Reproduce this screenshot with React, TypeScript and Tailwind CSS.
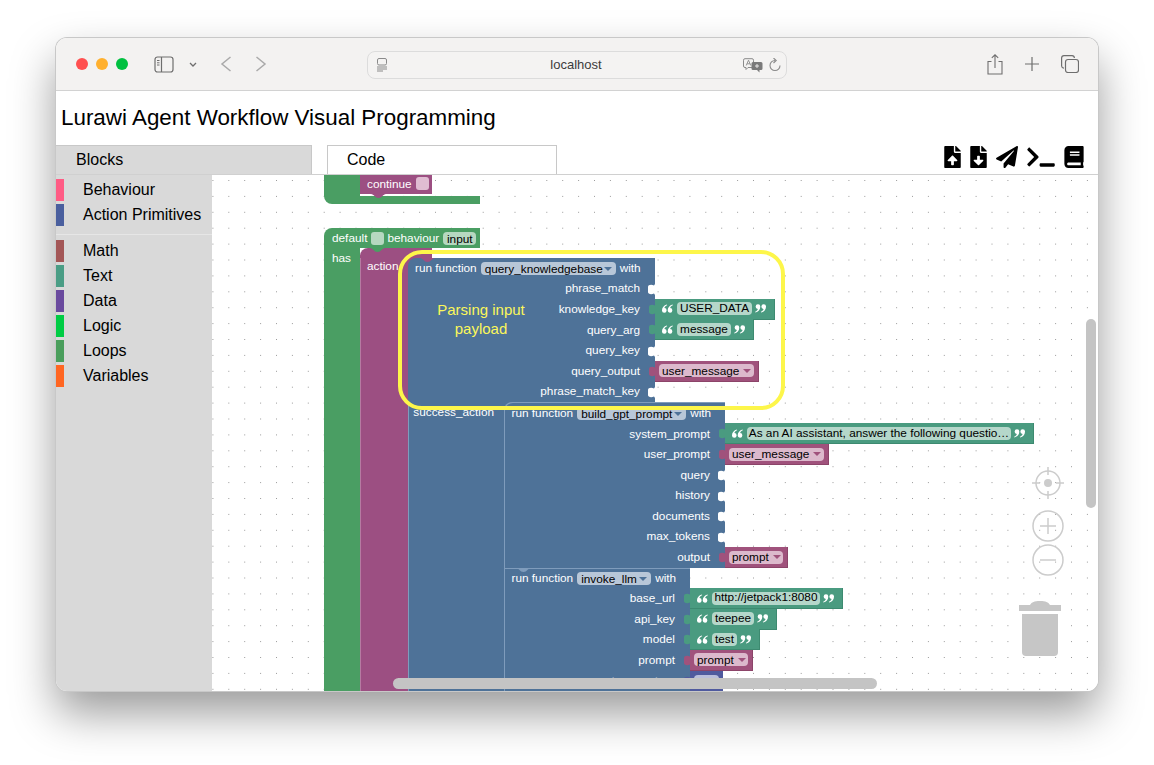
import React from 'react';
import { FaFileUpload, FaFileDownload, FaPaperPlane, FaTerminal, FaBook } from 'react-icons/fa';

const categories = [
  { label: 'Behaviour', color: 'bg-[#ff5c85]' },
  { label: 'Action Primitives', color: 'bg-[#4a5f9e]' },
  { label: 'Math', color: 'bg-[#a35656]', divider: true },
  { label: 'Text', color: 'bg-[#4a9d85]' },
  { label: 'Data', color: 'bg-[#6a4a9e]' },
  { label: 'Logic', color: 'bg-[#00cc44]' },
  { label: 'Loops', color: 'bg-[#4a9e5c]' },
  { label: 'Variables', color: 'bg-[#ff6622]' },
];

const tabPath = 'M7 0L6 1.5C3 0 0 1 0 3V8C0 10 3 11 6 9.5L7 11Z';

const Tab = ({ className }: { className: string }) => (
  <svg viewBox="0 0 7 11" className={`absolute right-full top-[5px] -mr-px h-[11px] w-[7px] ${className}`}>
    <path d={tabPath} />
  </svg>
);

const Quote = ({ close }: { close?: boolean }) => (
  <svg viewBox="0 0 10 8" className={`h-[9px] w-[11px] fill-white ${close ? 'rotate-180' : ''}`}>
    <path d="M4.4.3C1.8 1 0 3 0 5.6A2.1 2.1 0 1 0 2.2 3.6C2.4 2.6 3.2 1.6 4.7 1.1ZM9.6.3C7 1 5.2 3 5.2 5.6A2.1 2.1 0 1 0 7.4 3.6C7.6 2.6 8.4 1.6 9.9 1.1Z" />
  </svg>
);

const Str = ({ text, width }: { text: string; width: string }) => (
  <div className={`absolute left-full top-[-0.6px] z-10 flex h-[21px] items-center border-r border-b border-[#3d8a70] bg-[#4a9b80] ${width}`}>
    <Tab className="fill-[#4a9b80]" />
    <div className="flex w-[22px] shrink-0 justify-end pr-[4px]"><Quote /></div>
    <div className="flex h-[13px] min-w-0 flex-1 items-center justify-center overflow-hidden whitespace-nowrap rounded-[4px] bg-[#b5d7ca] text-[11.8px] text-black">{text}</div>
    <div className="flex w-[22px] shrink-0 justify-start pl-[3px]"><Quote close /></div>
  </div>
);

const Var = ({ text, width }: { text: string; width: string }) => (
  <div className={`absolute left-full top-[-0.6px] z-10 flex h-[21px] items-center border-r border-b border-[#8c4469] bg-[#a0527c] pl-[4px] pr-[4px] ${width}`}>
    <Tab className="fill-[#a0527c]" />
    <div className="flex h-[13px] flex-1 items-center rounded-[4px] bg-[#dcb9cc] pl-[3px] text-[11.8px] leading-[14px] text-black">
      <span>{text}</span>
      <span className="ml-[4px] h-0 w-0 border-x-[4px] border-t-[4px] border-x-transparent border-t-[#a0527c]" />
    </div>
  </div>
);

const Input = ({ label, children }: { label: string; children?: React.ReactNode }) => (
  <div className="relative flex h-[20.6px] items-center justify-end">
    <span className="whitespace-nowrap pr-[15px] text-[11.8px] text-white">{label}</span>
    {children ?? (
      <svg viewBox="0 0 7 11" className="absolute right-0 top-[5px] h-[11px] w-[7px] fill-white">
        <path d={tabPath} />
      </svg>
    )}
  </div>
);

const FnHead = ({ name, width }: { name: string; width: string }) => (
  <div className="flex h-[20.6px] items-center gap-[4px] pl-[7.5px] text-[11.8px] text-white">
    <span className="whitespace-nowrap">run function</span>
    <div className={`flex h-[13px] items-center justify-between rounded-[4px] bg-[#b8c7d8] px-[4px] leading-[14px] text-black ${width}`}>
      <span>{name}</span>
      <span className="h-0 w-0 border-x-[4px] border-t-[4px] border-x-transparent border-t-[#4e7298]" />
    </div>
    <span>with</span>
  </div>
);

const Notch = ({ className }: { className: string }) => (
  <svg viewBox="0 0 15 4" className={`absolute h-[4px] w-[15px] ${className}`}>
    <path d="M0 0C3 0 4 4 7.5 4S12 0 15 0Z" />
  </svg>
);

const Browser = () => (
  <div className="flex h-[53px] shrink-0 items-center border-b border-[#d2d2d2] bg-[#f3f2f1] pl-[20px] text-[#6e6e6e]">
    <div className="flex gap-[8px]">
      <span className="h-[12px] w-[12px] rounded-full bg-[#ff5050]" />
      <span className="h-[12px] w-[12px] rounded-full bg-[#ffb02e]" />
      <span className="h-[12px] w-[12px] rounded-full bg-[#00c040]" />
    </div>
    <svg viewBox="0 0 20 17" className="ml-[26px] h-[17px] w-[20px] fill-none stroke-[#6e6e6e]">
      <rect x="1" y="1" width="18" height="15" rx="2.5" strokeWidth="1.2" />
      <path d="M7.5 1V16" strokeWidth="1.2" />
      <path d="M3 4.5H5.5M3 6.8H5.5M3 9H5.5" strokeWidth="1" />
    </svg>
    <svg viewBox="0 0 8 5" className="ml-[15px] h-[5px] w-[8px] fill-none stroke-[#6e6e6e]">
      <path d="M1 1L4 4L7 1" strokeWidth="1.3" />
    </svg>
    <svg viewBox="0 0 12 16" className="ml-[23px] h-[16px] w-[12px] fill-none stroke-[#aaaaaa]">
      <path d="M10.5 1L2 8L10.5 15" strokeWidth="1.5" />
    </svg>
    <svg viewBox="0 0 12 16" className="ml-[23px] h-[16px] w-[12px] fill-none stroke-[#aaaaaa]">
      <path d="M1.5 1L10 8L1.5 15" strokeWidth="1.5" />
    </svg>
    <div className="relative ml-[100px] mt-[2px] flex h-[28px] w-[420px] items-center justify-center rounded-[8px] border border-[#dcdcdc] bg-[#f4f3f2] text-[13px] text-[#3c3c3c]">
      <svg viewBox="0 0 12 14" className="absolute left-[8px] top-[6px] h-[14px] w-[12px] fill-none stroke-[#8a8a8a]">
        <rect x="1.5" y="0.5" width="9" height="6.5" rx="1.5" />
        <path d="M1 9H11M1 11H11M1 13H7" />
      </svg>
      <span className="-ml-[2px]">localhost</span>
      <svg viewBox="0 0 20 15" className="absolute right-[23px] top-[6px] h-[15px] w-[20px]">
        <path d="M2 .7H9A1.5 1.5 0 0 1 10.5 2.2V8A1.5 1.5 0 0 1 9 9.5H5L3 11.5V9.5H2A1.5 1.5 0 0 1 .5 8V2.2A1.5 1.5 0 0 1 2 .7Z" fill="#f4f3f2" stroke="#8a8a8a" />
        <path d="M3.2 7.5L5.5 2.2L7.8 7.5M4.1 5.8H6.9" fill="none" stroke="#8a8a8a" strokeWidth=".9" />
        <path d="M10 4H18A1.5 1.5 0 0 1 19.5 5.5V10.5A1.5 1.5 0 0 1 18 12H16.5V14.5L14 12H10A1.5 1.5 0 0 1 8.5 10.5V5.5A1.5 1.5 0 0 1 10 4Z" fill="#7a7a7a" />
        <path d="M12 8H16M14 6V10" stroke="#f4f3f2" strokeWidth=".9" />
      </svg>
      <svg viewBox="0 0 12 14" className="absolute right-[5px] top-[6px] h-[14px] w-[12px] fill-none stroke-[#8a8a8a]">
        <path d="M6 2.5A5 5 0 1 0 11 7.5" strokeWidth="1.1" />
        <path d="M4.5 0L7.2 2.5L4.5 5" strokeWidth="1.1" />
      </svg>
    </div>
    <svg viewBox="0 0 16 21" className="ml-[200px] h-[21px] w-[16px] fill-none stroke-[#6e6e6e]">
      <path d="M4.5 7.5H1V20H15V7.5H11.5M8 14V1M4.8 3.8L8 .8L11.2 3.8" strokeWidth="1.1" />
    </svg>
    <svg viewBox="0 0 14 14" className="ml-[22px] h-[14px] w-[14px] fill-none stroke-[#6e6e6e]">
      <path d="M7 0V14M0 7H14" strokeWidth="1.2" />
    </svg>
    <svg viewBox="0 0 18 18" className="ml-[22px] h-[18px] w-[18px] fill-none stroke-[#6e6e6e]">
      <rect x="4.5" y="4.5" width="13" height="13" rx="2.5" strokeWidth="1.2" />
      <path d="M3 13.2A2.5 2.5 0 0 1 .6 11V3A2.5 2.5 0 0 1 3 .6H11A2.5 2.5 0 0 1 13.4 3" strokeWidth="1.2" />
    </svg>
  </div>
);

const Workspace = () => (
  <div className="relative min-w-0 flex-1 overflow-hidden bg-white text-[11.8px]">
    <svg className="absolute inset-0 h-full w-full">
      <defs>
        <pattern id="dots" x="0.4" y="5" width="15.9" height="15.9" patternUnits="userSpaceOnUse">
          <rect width="1" height="1" fill="#9a9a9a" />
        </pattern>
      </defs>
      <rect width="100%" height="100%" fill="url(#dots)" />
    </svg>

    {/* continue block end */}
    <div className="absolute left-[112px] top-[-20px] flex w-[156px] flex-col">
      <div className="flex h-[41px]">
        <div className="w-[36px] bg-[#4a9e63]" />
        <div className="relative flex h-[39px] w-[72px] items-end bg-[#9c4f82] pb-[4px] pl-[7px] text-white">
          <span className="mr-[4px] translate-y-[1px] leading-[13px]">continue</span>
          <span className="h-[13px] w-[13px] rounded-[3px] bg-[#e0bcd2]" />
          <Notch className="left-[11px] top-full fill-[#9c4f82]" />
        </div>
      </div>
      <div className="h-[8px] rounded-bl-lg bg-[#4a9e63]" />
    </div>

    {/* default behaviour block */}
    <div className="absolute left-[112px] top-[53px] flex w-[156px] flex-col text-white">
      <div className="flex h-[20px] items-center rounded-tl-lg bg-[#4a9e63] pl-[8px]">
        <span className="translate-y-[1px]">default</span>
        <span className="ml-[4px] h-[13px] w-[13px] rounded-[3px] bg-[#b6d8c0]" />
        <span className="ml-[3px] translate-y-[1px]">behaviour</span>
        <span className="ml-[4px] h-[13px] w-[33px] rounded-[4px] bg-[#b6d8c0] text-center leading-[14px] text-black">input</span>
      </div>
      <div className="flex">
        <div className="w-[36px] shrink-0 bg-[#4a9e63] pl-[8px] pt-[2px]">has</div>
        <div className="relative flex flex-col">
          <Notch className="left-[10px] top-0 z-10 fill-[#4a9e63]" />
          <div className="h-[10.3px] w-[72px] rounded-tl-lg bg-[#9c4f82]" />
          <div className="flex">
            <div className="w-[47.5px] shrink-0 border-l border-[#b67aa2] bg-[#9c4f82] pl-[6px]">action</div>
            <div className="flex w-[247.5px] shrink-0 flex-col">
              <div className="bg-[#9c4f82]">
                <div className="relative rounded-tl-lg bg-[#4e7298]">
                  <Notch className="left-[12px] top-0 fill-[#9c4f82]" />
                  <FnHead name="query_knowledgebase" width="w-[135px]" />
                  <Input label="phrase_match" />
                  <Input label="knowledge_key"><Str text="USER_DATA" width="w-[120px]" /></Input>
                  <Input label="query_arg"><Str text="message" width="w-[99px]" /></Input>
                  <Input label="query_key" />
                  <Input label="query_output"><Var text="user_message" width="w-[104px]" /></Input>
                  <Input label="phrase_match_key" />
                </div>
              </div>
              <div className="flex">
                <div className="w-[96.5px] shrink-0 bg-[#4e7298] pr-[10px] pt-[1.5px] text-right shadow-[inset_1px_0_0_#7f9cbc]">success_action</div>
                <div className="flex flex-col">
                  <div className="w-[221px] bg-[#4e7298]">
                    <div className="relative rounded-tl-lg bg-[#4e7298] pt-[1px] shadow-[inset_1px_1px_0_#7f9cbc]">
                      <FnHead name="build_gpt_prompt" width="w-[109px]" />
                      <Input label="system_prompt"><Str text="As an AI assistant, answer the following questio…" width="w-[309px]" /></Input>
                      <Input label="user_prompt"><Var text="user_message" width="w-[104px]" /></Input>
                      <Input label="query" />
                      <Input label="history" />
                      <Input label="documents" />
                      <Input label="max_tokens" />
                      <Input label="output"><Var text="prompt" width="w-[63px]" /></Input>
                    </div>
                  </div>
                  <div className="relative w-[186px] bg-[#4e7298] shadow-[inset_1px_1px_0_#7f9cbc]">
                    <Notch className="left-[12px] top-0 fill-[#7f9cbc]" />
                    <FnHead name="invoke_llm" width="w-[74px]" />
                    <Input label="base_url"><Str text="http://jetpack1:8080" width="w-[153px]" /></Input>
                    <Input label="api_key"><Str text="teepee" width="w-[87px]" /></Input>
                    <Input label="model"><Str text="test" width="w-[70px]" /></Input>
                    <Input label="prompt"><Var text="prompt" width="w-[63px]" /></Input>
                    <Input label="temperature">
                      <div className="absolute left-full top-[-0.6px] z-10 flex h-[21px] w-[33px] items-center bg-[#4f5a9e] pl-[4px]">
                        <Tab className="fill-[#4f5a9e]" />
                        <div className="h-[13px] w-[25px] rounded-[4px] bg-[#b9bedb] text-center leading-[14px] text-black">0.0</div>
                      </div>
                    </Input>
                  </div>
                </div>
              </div>
            </div>
          </div>
        </div>
      </div>
    </div>

    {/* annotation */}
    <div className="absolute left-[186px] top-[75px] z-20 flex h-[160px] w-[387px] items-center rounded-[24px] border-[4px] border-[#fdf64a] pl-[4px]">
      <p className="mt-[-22px] w-[150px] text-center text-[15px] leading-[19px] text-[#fbf75a]">Parsing input<br />payload</p>
    </div>

    {/* zoom and trash controls */}
    <svg viewBox="0 0 32 32" className="absolute left-[820px] top-[292px] h-[32px] w-[32px] fill-none stroke-[#cccccc]">
      <circle cx="16" cy="16" r="12" strokeWidth="1.5" />
      <circle cx="16" cy="16" r="4" fill="#cccccc" stroke="none" />
      <path d="M16 0V8M16 24V32M0 16H8M24 16H32" strokeWidth="1.5" />
    </svg>
    <svg viewBox="0 0 32 32" className="absolute left-[820px] top-[335px] h-[32px] w-[32px] fill-none stroke-[#cccccc]">
      <circle cx="16" cy="16" r="15" strokeWidth="1.5" />
      <path d="M16 8V24M8 16H24" strokeWidth="1.5" />
    </svg>
    <svg viewBox="0 0 32 32" className="absolute left-[820px] top-[369px] h-[32px] w-[32px] fill-none stroke-[#cccccc]">
      <circle cx="16" cy="16" r="15" strokeWidth="1.5" />
      <path d="M8 16H24" strokeWidth="1.5" />
    </svg>
    <svg viewBox="0 0 42 55" className="absolute left-[807px] top-[426px] h-[55px] w-[42px] fill-[#c6c6c6]">
      <path d="M0 4H11C13 1 15 0 21 0S29 1 31 4H42V10H0Z" />
      <path d="M3 13H39V51A4 4 0 0 1 35 55H7A4 4 0 0 1 3 51Z" />
    </svg>

    {/* scrollbars */}
    <div className="absolute left-[181px] top-[503px] z-30 h-[11px] w-[484px] rounded-full bg-[#c4c4c4]" />
    <div className="absolute left-[874px] top-[144px] z-30 h-[189px] w-[10px] rounded-full bg-[#c4c4c4]" />
  </div>
);

export default function App() {
  return (
    <div className="h-[765px] w-[1154px] overflow-hidden bg-white pl-[56px] pt-[38px] font-['Liberation_Sans',Arial,sans-serif]">
      <div className="flex h-[653px] w-[1042px] flex-col overflow-hidden rounded-[11px] bg-white shadow-[0_0_0_1px_#c8c8c8,0_22px_45px_rgba(0,0,0,0.4)]">
        <Browser />
        <h1 className="flex h-[54px] shrink-0 items-center pl-[5px] text-[22.4px] font-normal text-black">Lurawi Agent Workflow Visual Programming</h1>
        <div className="flex h-[30px] shrink-0 border-b border-[#d0d0d0]">
          <div className="flex w-[256px] items-center border-t border-r border-[#c8c8c8] bg-[#d9d9d9] pl-[20px] text-[16px] text-black">Blocks</div>
          <div className="ml-[15px] flex w-[230px] items-center border-x border-t border-[#c8c8c8] pl-[19px] text-[16px] text-black">Code</div>
          <div className="ml-auto flex items-center pb-[6px] pr-[14px] text-black">
            <FaFileUpload className="h-[22px] w-[17px]" />
            <FaFileDownload className="ml-[9px] h-[22px] w-[17px]" />
            <FaPaperPlane className="ml-[9px] h-[22px] w-[22px]" />
            <FaTerminal className="ml-[9px] h-[22px] w-[28px]" />
            <FaBook className="ml-[9px] h-[22px] w-[20px]" />
          </div>
        </div>
        <div className="flex min-h-0 flex-1">
          <div className="w-[156px] shrink-0 bg-[#d9d9d9] pt-[4px]">
            {categories.map((c) => (
              <div key={c.label}>
                {c.divider && <div className="mb-[5px] mt-[8px] h-px bg-[#e6e6e6]" />}
                <div className="mb-[3px] flex h-[22px] items-center text-[16px] text-black">
                  <span className={`h-full w-[8px] ${c.color}`} />
                  <span className="ml-[19px] whitespace-nowrap">{c.label}</span>
                </div>
              </div>
            ))}
          </div>
          <Workspace />
        </div>
      </div>
    </div>
  );
}
